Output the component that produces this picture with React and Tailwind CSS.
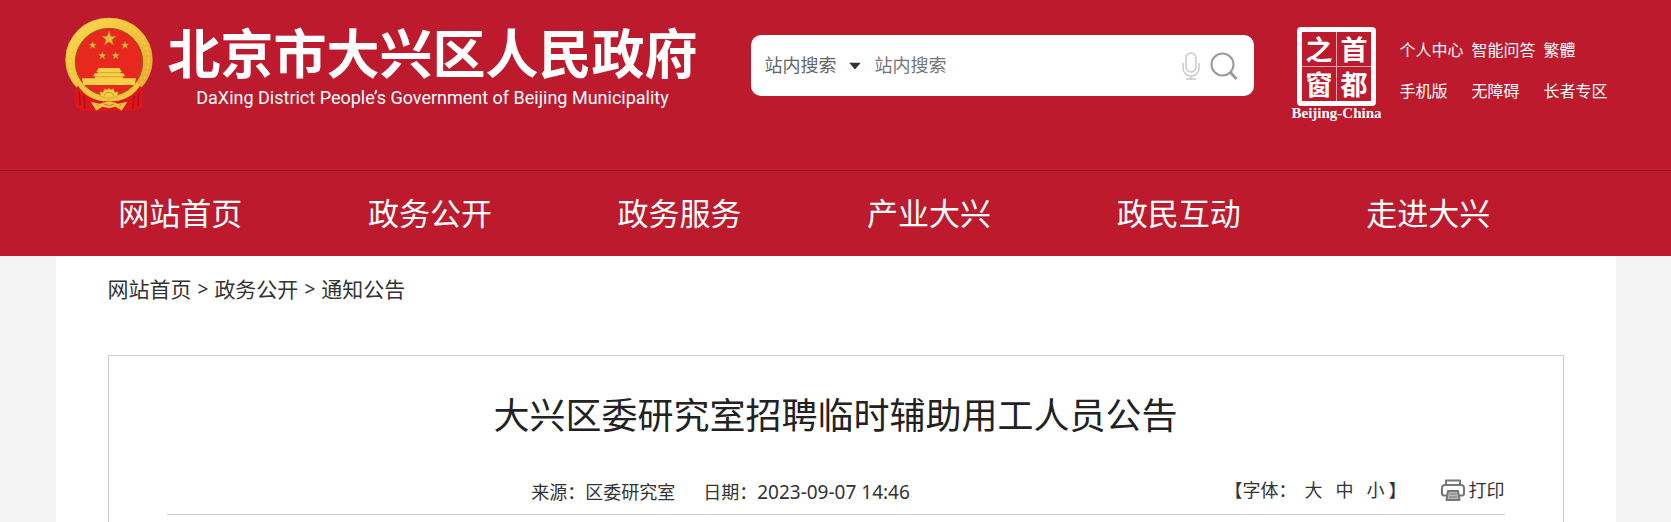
import React, { useState } from 'react';

const navItems = ['网站首页', '政务公开', '政务服务', '产业大兴', '政民互动', '走进大兴'];
const topLinks = ['个人中心', '智能问答', '繁體', '手机版', '无障碍', '长者专区'];
const crumbs = ['网站首页', '政务公开', '通知公告'];
const fontSizes = ['大', '中', '小'];
const sealChars = ['之', '首', '窗', '都'];

const Star = ({ x, y, r }) => (
  <path
    transform={`translate(${x} ${y}) scale(${r})`}
    d="M0-1 .25-.33.95-.31.4.13.59.81 0 .42-.59.81-.4.13-.95-.31-.25-.33Z"
    fill="#e8b83f"
    stroke="#b0701f"
    strokeWidth=".08"
  />
);

const Emblem = () => (
  <svg viewBox="18 22 270 288" className="h-[96px] w-[90px] shrink-0" aria-hidden="true">
    <defs>
      <linearGradient id="gold" x1="0" y1="0" x2="1" y2="1">
        <stop offset="0" stopColor="#fbd84c" />
        <stop offset=".5" stopColor="#f3c23b" />
        <stop offset="1" stopColor="#e2a02c" />
      </linearGradient>
    </defs>
    <ellipse cx="153" cy="150" rx="131" ry="126" fill="url(#gold)" />
    <circle cx="153" cy="153" r="119" fill="none" stroke="#f8dc62" strokeWidth="6" strokeDasharray="9 7" opacity=".4" />
    <circle cx="153" cy="157" r="101" fill="#e8281f" stroke="#94501c" strokeWidth="3" />
    <Star x={153} y={87} r={23} />
    <Star x={104} y={107} r={12} />
    <Star x={201} y={107} r={12} />
    <Star x={133} y={138} r={12} />
    <Star x={173} y={138} r={12} />
    <path d="M122 175h62l8 12h-5v4h9l6 9h-7v6h39l-4 20H76l-4-20h39v-6h-7l6-9h10v-4h-5Z" fill="#f8cf48" />
    <path d="M117 189h72M108 201h90" stroke="#cf8c25" strokeWidth="2" />
    <path d="M56 226c16 28 44 47 97 52 53-5 81-24 97-52l12 14-2 40 4 10-28 15-12-4-8 3H90l-8-3-12 4-28-15 4-10-2-40Z" transform="translate(10 0) scale(.935 1)" fill="#dc161b" />
    <path d="M62 246c6 14 1 28 5 42M76 258c6 12 1 24 6 40M244 246c-6 14-1 28-5 42M230 258c-6 12-1 24-6 40" fill="none" stroke="#a80f19" strokeWidth="4" />
    <path d="M64 222c16 28 42 42 72 46l17-9 17 9c30-4 56-18 72-46" fill="none" stroke="#f4c53f" strokeWidth="13" strokeLinejoin="round" />
    <path d="M128 260l-2-13 10 1 4-11 8 4 5-6 5 6 8-4 4 11 10-1-2 13-14 4h-22Z" fill="#f8cf48" stroke="#d9962b" strokeWidth="2" />
    <path d="M138 261a15 13 0 0 1 30 0" fill="none" stroke="#d9962b" strokeWidth="3" />
    <path d="M98 276l28 6 12-4 15-2 15 2 12 4 28-6-17 27-18-12-20 5-20-5-18 12Z" fill="#f1c23f" />
    <path d="M138 283l15 5 15-5M116 283l6 7M190 283l-6 7" stroke="#c9832a" strokeWidth="3" fill="none" />
  </svg>
);

const MicIcon = () => (
  <svg viewBox="0 0 18 28" className="h-[28px] w-[18px]" fill="none" stroke="#c9c9c9" strokeWidth="1.5">
    <rect x="4" y="1" width="10" height="19" rx="5" />
    <path d="M1 11v5a8 8 0 0 0 16 0v-5M9 24v3M4 27h10" />
  </svg>
);

const SearchIcon = () => (
  <svg viewBox="0 0 28 28" className="size-[28px]" fill="none" stroke="#999">
    <circle cx="12.5" cy="12.5" r="11" strokeWidth="2" />
    <path d="m20.500 20.500 6 6.500" strokeWidth="3" />
  </svg>
);

const PrinterIcon = () => (
  <svg viewBox="0 0 24 22" className="h-[22px] w-[24px]" fill="none" stroke="#777" strokeWidth="2" strokeLinejoin="round">
    <path d="M5 6V1.500h14V6" />
    <path d="M6 16.500H3a2 2 0 0 1-2-2V9a3 3 0 0 1 3-3h16a3 3 0 0 1 3 3v5.500a2 2 0 0 1-2 2h-3" />
    <path d="M7 12h10l1.500 9h-13Z" fill="#bbb" />
    <path d="M8.500 15h7M8 18h8" strokeWidth="1" />
  </svg>
);

const Seal = () => (
  <div className="mt-[10px] ml-[38px] flex w-[90px] shrink-0 flex-col items-center text-white">
    <div className="grid size-[79px] grid-cols-2 grid-rows-2 gap-px rounded-sm border-[5px] border-white bg-[#e8a5ab]">
      {sealChars.map((char) => (
        <span key={char} className="flex items-center justify-center bg-[#bd1a2d] text-[27px] leading-none font-bold">
          {char}
        </span>
      ))}
    </div>
    <span className="font-['Liberation_Serif',serif] text-[15px] leading-[14px] font-bold">Beijing-China</span>
  </div>
);

const SearchBox = () => {
  const [scope, setScope] = useState('站内搜索');
  const [keyword, setKeyword] = useState('');

  return (
    <form
      onSubmit={(e) => e.preventDefault()}
      className="mt-[18px] ml-[53px] flex h-[61px] w-[503px] items-center rounded-[10px] bg-white pr-4 pl-[14px] text-[18px] text-[#666]"
    >
      <div className="relative">
        <select
          aria-label="搜索范围"
          value={scope}
          onChange={(e) => setScope(e.target.value)}
          className="w-[96px] appearance-none bg-transparent"
        >
          <option>站内搜索</option>
        </select>
        <svg viewBox="0 0 12 7" className="pointer-events-none absolute top-1/2 right-0 h-[7px] w-[12px] -translate-y-1/2">
          <path d="M0 0h12L6 7Z" fill="#333" />
        </svg>
      </div>
      <input
        aria-label="搜索关键词"
        type="text"
        placeholder="站内搜索"
        value={keyword}
        onChange={(e) => setKeyword(e.target.value)}
        className="ml-[14px] min-w-0 flex-1 bg-transparent outline-none placeholder:text-[#757575]"
      />
      <button type="button" aria-label="语音搜索"><MicIcon /></button>
      <button type="submit" aria-label="搜索" className="ml-[10px]"><SearchIcon /></button>
    </form>
  );
};

const Header = () => (
  <header className="bg-[#bd1a2d] text-white">
    <div className="mx-auto flex max-w-[1560px] items-start pt-[17px] pb-[50px] pl-2">
      <a href="#" className="flex shrink-0 items-start">
        <Emblem />
        <span className="ml-[14px] flex w-[530px] flex-col items-center pt-1 whitespace-nowrap">
          <span className="text-[53px] leading-[66px] font-bold">北京市大兴区人民政府</span>
          <span className="font-[Roboto,sans-serif] text-[18px] leading-[22px]">
            DaXing District People’s Government of Beijing Municipality
          </span>
        </span>
      </a>
      <SearchBox />
      <Seal />
      <ul className="mt-[21px] ml-[18px] grid shrink-0 grid-cols-3 gap-x-2 gap-y-[17px] text-base">
        {topLinks.map((link) => (
          <li key={link}><a href="#">{link}</a></li>
        ))}
      </ul>
    </div>
    <nav className="border-t border-[#9c1624]">
      <ul className="mx-auto flex h-[85px] max-w-[1560px] items-center">
        {navItems.map((item) => (
          <li key={item} className="w-[16%] text-center text-[31px]"><a href="#">{item}</a></li>
        ))}
      </ul>
    </nav>
  </header>
);

const ArticleMeta = () => (
  <div className="flex items-center border-b border-[#ccc] pb-[7px] text-[18px] leading-[30px]">
    <p className="flex flex-1 justify-center gap-[28px] pt-1 pl-[50px]">
      <span>来源：区委研究室</span>
      <span>日期：<time className="text-[19px]">2023-09-07 14:46</time></span>
    </p>
    <div className="flex items-center">
      <span>【字体：</span>
      <span className="flex gap-[13px] pl-[8px]">
        {fontSizes.map((size) => (
          <button key={size} type="button">{size}</button>
        ))}
      </span>
      <span className="pl-1">】</span>
      <button type="button" className="ml-[34px] flex items-center gap-1">
        <PrinterIcon />
        打印
      </button>
    </div>
  </div>
);

export default function App() {
  return (
    <div className="min-h-screen bg-[#f4f4f4] font-['Noto_Sans','Noto_Sans_CJK_SC',sans-serif] text-[#333]">
      <Header />
      <main className="mx-auto max-w-[1560px] bg-white px-[52px] pt-[17px]">
        <nav aria-label="面包屑" className="flex gap-[6px] text-[21px] leading-[32px]">
          {crumbs.map((crumb, i) => (
            <React.Fragment key={crumb}>
              {i > 0 && <span className="text-[19px]">&gt;</span>}
              <a href="#">{crumb}</a>
            </React.Fragment>
          ))}
        </nav>
        <article className="mt-[50px] border border-b-0 border-[#ccc] px-[58px] pt-[30px] pb-[7px]">
          <h1 className="mb-[27px] text-center text-[36px] leading-[60px] text-[#222]">
            大兴区委研究室招聘临时辅助用工人员公告
          </h1>
          <ArticleMeta />
        </article>
      </main>
    </div>
  );
}
